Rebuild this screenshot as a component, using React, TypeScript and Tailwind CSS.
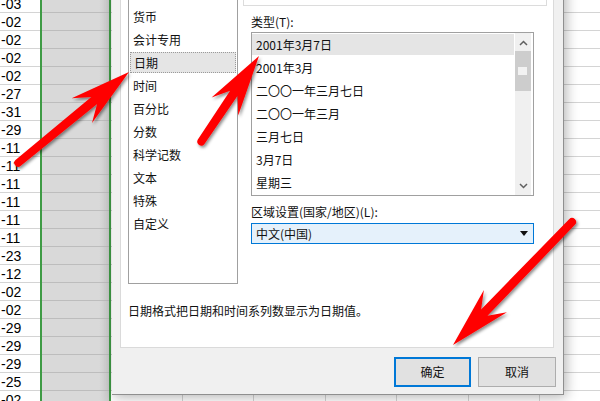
const dates = ['-03', '-02', '-02', '-02', '-02', '-27', '-31', '-29', '-11', '-11', '-11', '-11', '-11', '-11', '-23', '-12', '-02', '-02', '-29', '-29', '-29', '-25', '-02'];

const categories = ['货币', '会计专用', '日期', '时间', '百分比', '分数', '科学记数', '文本', '特殊', '自定义'];

const types = ['2001年3月7日', '2001年3月', '二〇〇一年三月七日', '二〇〇一年三月', '三月七日', '3月7日', '星期三'];

const rows = Array.from({ length: 23 }, (_, i) => i);

// builds a red arrow outline from tail (tx,ty) to tip (px,py)
function arrowPath(tx: number, ty: number, px: number, py: number) {
	const len = Math.hypot(px - tx, py - ty);
	const ux = (px - tx) / len;
	const uy = (py - ty) / len;
	const nx = -uy;
	const ny = ux;
	const headLen = 61;
	const headHalf = 16;
	const notch = 45;
	const sh = 4.5;
	const st = 4;
	const pt = (d: number, w: number) => `${(px - ux * d + nx * w).toFixed(1)} ${(py - uy * d + ny * w).toFixed(1)}`;
	const ta = `${(tx + nx * st).toFixed(1)} ${(ty + ny * st).toFixed(1)}`;
	const tb = `${(tx - nx * st).toFixed(1)} ${(ty - ny * st).toFixed(1)}`;
	return `M ${px} ${py} L ${pt(headLen, headHalf)} L ${pt(notch, sh)} L ${ta} A ${st} ${st} 0 0 1 ${tb} L ${pt(notch, -sh)} L ${pt(headLen, -headHalf)} Z`;
}

function Cell({ line, children }: { line: string; children?: React.ReactNode }) {
	return (
		<div className={`h-[18px] border-b ${line} flex items-end pl-[1px] text-[14px] leading-[16px]`}>
			{children}
		</div>
	);
}

function Chevron({ up }: { up?: boolean }) {
	return (
		<svg width="9" height="6" viewBox="0 0 9 6">
			<polyline
				points={up ? '1,5 4.5,1.5 8,5' : '1,1 4.5,4.5 8,1'}
				fill="none"
				stroke="#606060"
				strokeWidth="1.5"
			/>
		</svg>
	);
}

export default function App() {
	return (
		<div className="relative w-[600px] h-[401px] overflow-hidden bg-white">
			{/* spreadsheet behind the dialog */}
			<div className="flex -mt-[5px] font-['Liberation_Sans',sans-serif] text-black">
				<div className="w-[40px]">
					{dates.map((d, i) => (
						<Cell key={i} line="border-[#d4d4d4]">{d}</Cell>
					))}
				</div>
				<div className="w-[2px] bg-[#3f9b45]" />
				<div className="w-[68px] bg-[linear-gradient(to_right,#d9d9d9_85%,#cbcbcb)]">
					{rows.map((r) => (
						<Cell key={r} line="border-[#bdbdbd]" />
					))}
				</div>
				<div className="w-[2px] bg-[#3f9b45]" />
				{[0, 1, 2, 3, 4, 5].map((c) => (
					<div key={c} className="w-[72px] border-r border-[#d4d4d4]">
						{rows.map((r) => (
							<Cell key={r} line="border-[#d4d4d4]" />
						))}
					</div>
				))}
				<div className="w-[60px]">
					{rows.map((r) => (
						<Cell key={r} line="border-[#d4d4d4]" />
					))}
				</div>
			</div>

			{/* format cells dialog */}
			<div className="absolute left-[112px] top-[-50px] w-[452px] h-[445px] bg-[#f0f0f0] border-r border-b border-[#8f8f8f] shadow-[2px_2px_12px_rgba(0,0,0,0.3)] font-['Noto_Sans_CJK_SC',sans-serif] text-[12px] text-[#111]">
				<div className="ml-[8px] w-[434px] h-[398px] bg-white border-x border-b border-[#dadada] flex flex-col">
					<div className="flex pt-[8px]">
						<div className="ml-[7px] w-[110px] h-[326px] border border-[#a0a0a0] pt-[46px] overflow-hidden">
							{categories.map((c) => (
								<div key={c} className="h-[23px] py-px">
									<div
										className={`h-full mx-px pl-[3px] flex items-center ${
											c === '日期' ? 'bg-[#e5e5e5] border border-dotted border-[#9a9a9a] pl-[2px]' : ''
										}`}
									>
										{c}
									</div>
								</div>
							))}
						</div>
						<div className="ml-[5px] w-[304px] flex flex-col">
							<div className="h-[48px] border border-[#dcdcdc]" />
							<div className="mt-[8px] ml-[8px] h-[16px] leading-[16px]">类型(T):</div>
							<div className="mt-[2px] ml-[8px] w-[283px] h-[164px] border border-[#a0a0a0] flex">
								<div className="flex-1">
									{types.map((t, i) => (
										<div key={t} className="h-[23px] py-px">
											<div className={`h-full mr-px pl-[4px] flex items-center ${i === 0 ? 'bg-[#e5e5e5]' : ''}`}>
												{t}
											</div>
										</div>
									))}
								</div>
								<div className="w-[16px] mr-[2px] bg-[#f0f0f0] flex flex-col">
									<div className="h-[17px] flex items-center justify-center pt-[2px]">
										<Chevron up />
									</div>
									<div className="mt-px h-[40px] bg-[#cdcdcd] pt-[16px] pl-[3px]">
										<div className="w-[9px] h-[8px] bg-[#f2f2f2]" />
									</div>
									<div className="flex-1" />
									<div className="h-[17px] flex items-center justify-center pb-[2px]">
										<Chevron />
									</div>
								</div>
							</div>
							<div className="mt-[8px] ml-[8px] h-[16px] leading-[16px]">区域设置(国家/地区)(L):</div>
							<div className="mt-[3px] ml-[8px] w-[283px] h-[21px] border border-[#0078d7] bg-[#e5f1fb] flex items-center justify-between pl-[4px] pr-[5px]">
								<span>中文(中国)</span>
								<svg width="8" height="5" viewBox="0 0 8 5">
									<polygon points="0,0 8,0 4,5" fill="#111" />
								</svg>
							</div>
						</div>
					</div>
					<div className="mt-[19px] ml-[7px] h-[16px] leading-[16px]">日期格式把日期和时间系列数显示为日期值。</div>
				</div>
				<div className="flex justify-end gap-[7px] pr-[7px] mt-[9px]">
					<button type="button" className="w-[77px] h-[30px] bg-[#e1e1e1] border-2 border-[#0078d7] flex items-center justify-center">
						确定
					</button>
					<button type="button" className="w-[78px] h-[30px] bg-[#e1e1e1] border border-[#adadad] flex items-center justify-center">
						取消
					</button>
				</div>
			</div>

			{/* red arrows drawn on top */}
			<svg className="absolute inset-0 pointer-events-none" width="600" height="401" viewBox="0 0 600 401">
				<defs>
					<filter id="arrowShadow" x="-20%" y="-20%" width="140%" height="140%">
						<feDropShadow dx="1.5" dy="2" stdDeviation="1.6" floodColor="#000" floodOpacity="0.45" />
					</filter>
				</defs>
				<g fill="#ff0000" filter="url(#arrowShadow)">
					<path d={arrowPath(18, 163, 129, 72)} />
					<path d={arrowPath(201, 142, 259, 56)} />
					<path d={arrowPath(572, 222, 453, 345)} />
				</g>
			</svg>
		</div>
	);
}
